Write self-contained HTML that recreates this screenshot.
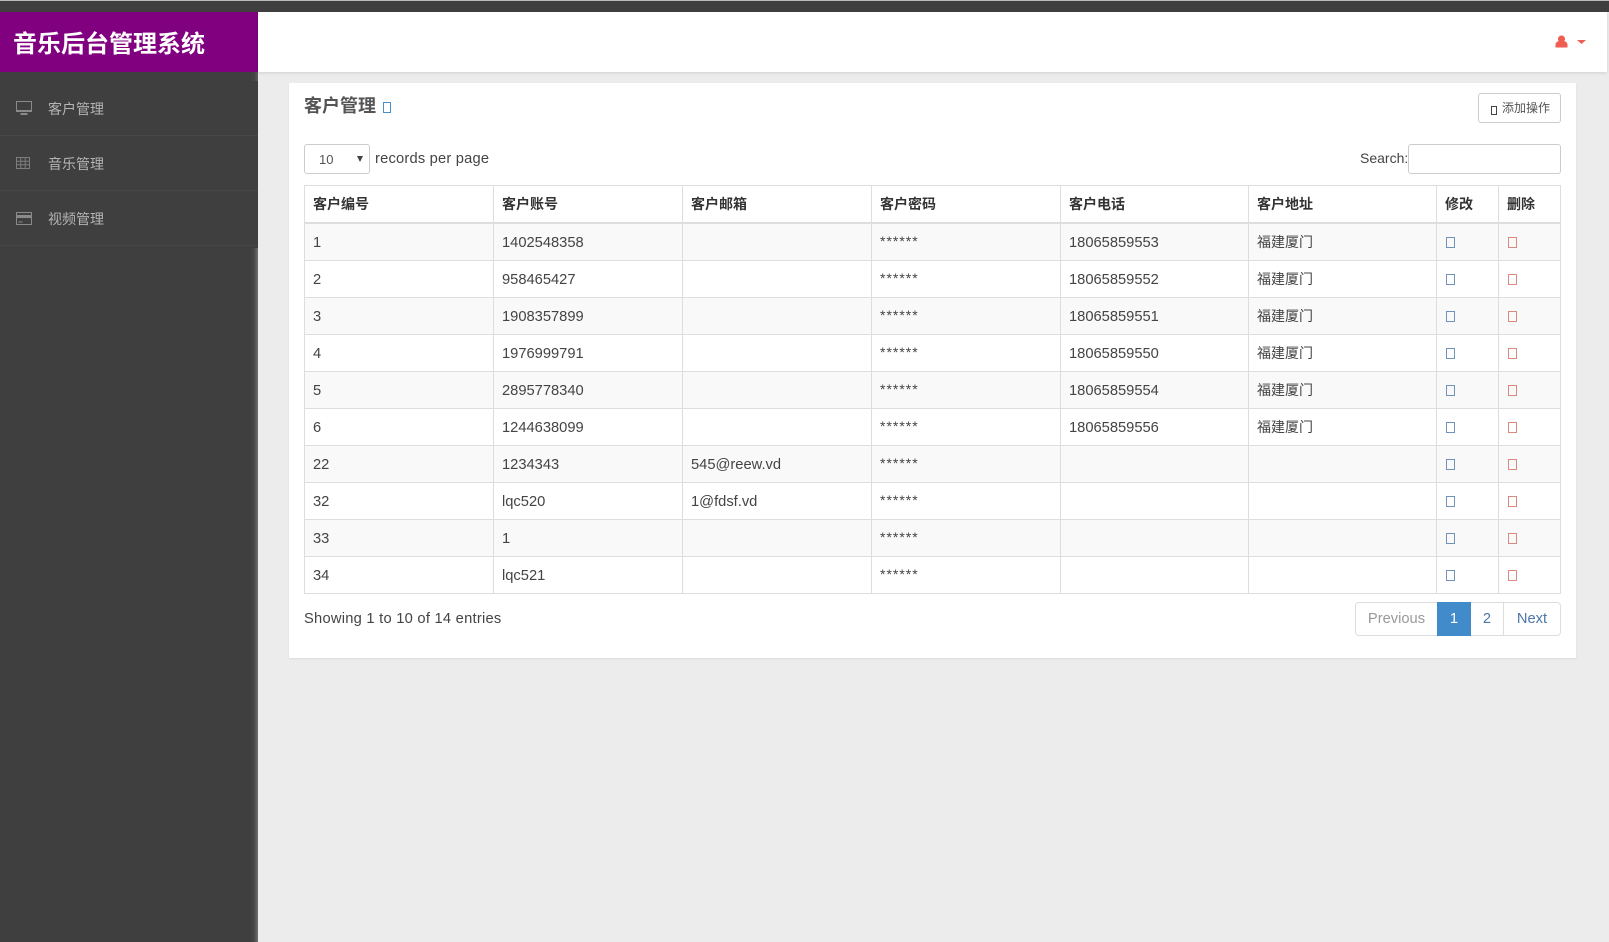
<!DOCTYPE html>
<html lang="zh">
<head>
<meta charset="utf-8">
<title>音乐后台管理系统</title>
<style>
*{box-sizing:border-box}
html,body{margin:0;padding:0;width:1609px;height:942px;overflow:hidden;background:#ececec;font-family:"Liberation Sans","Noto Sans CJK SC",sans-serif;color:#444}
.abs{position:absolute}
#top{left:0;top:1px;width:1609px;height:11px;background:#3f3f3f}
#topline{left:0;top:0;width:1609px;height:1px;background:#bbb}
#side{left:0;top:72px;width:258px;height:870px;background:#3f3f3f}
.sh{left:250px;width:8px;background:linear-gradient(to right,#3f3f3f,#474747 50%,#707070)}
#brand{left:0;top:12px;width:258px;height:60px;background:#800080;color:#fff;font-size:24px;font-weight:bold;line-height:65px;padding-left:13px;white-space:nowrap}
#head{left:258px;top:12px;width:1349px;height:60px;background:#fff;box-shadow:0 1px 3px rgba(0,0,0,.12)}
.mi{left:0;width:258px;height:55px;border-bottom:1px solid #474747;color:#b4b4b4;font-size:14px;line-height:56px;padding-left:48px}
#card{left:289px;top:83px;width:1287px;height:575px;background:#fff;box-shadow:0 1px 2px rgba(0,0,0,.08)}
#title{left:304px;top:93px;font-size:18px;font-weight:bold;color:#555;line-height:26px}
.t{width:8px;height:11px;border:1px solid #6f93ba;display:inline-block}
td .t{position:relative;top:1px;left:1px;width:9px}
.r{border-color:#d98a7e}
#btn{left:1478px;top:93px;width:83px;height:30px;border:1px solid #ccc;border-radius:3px;background:#fff;font-size:12px;color:#555;line-height:29px;padding-left:23px}
.ctl{border:1px solid #ccc;border-radius:3px;background:#fff;height:30px;top:144px}
.lbl{font-size:14.7px;line-height:20px;color:#444;letter-spacing:.2px}
table{position:absolute;left:304px;top:185px;width:1256px;border-collapse:collapse;table-layout:fixed;font-size:14.7px;color:#444}
th,td{border:1px solid #ddd;padding:0 0 0 8px;text-align:left;white-space:nowrap;overflow:hidden}
th{height:37.5px;font-size:14px;font-weight:bold;color:#333;border-bottom-width:2px}
td{height:37px;padding-top:2px}
tbody tr:nth-child(odd) td{background:#f9f9f9}
td.cn{font-size:14px;padding-top:1px}
td.pw{font-size:14px;padding-top:0;padding-bottom:2px;letter-spacing:1px}
#pag{left:1355px;top:602px;width:206px;height:34px;border:1px solid #ddd;border-radius:4px;font-size:14.7px;background:#fff}
#pag div{position:absolute;top:-1px;height:34px;text-align:center;line-height:35px;color:#4a76a8}
</style>
</head>
<body>
<div class="abs" id="topline"></div>
<div class="abs" id="top"></div>
<div class="abs" id="side"></div>
<div class="abs sh" style="top:248px;height:694px"></div>
<div class="abs sh" style="top:72px;height:9px;opacity:.6"></div>
<div class="abs" id="brand">音乐后台管理系统</div>
<div class="abs" id="head"></div>

<svg class="abs" style="left:1555px;top:34px" width="32" height="16" viewBox="0 0 32 16">
<path d="M6.500 1.500a3.500 3.500 0 0 1 2.800 5.600c2 .5 3.200 1.800 3.200 3.900v2.500H.5V11c0-2.100 1.200-3.400 3.200-3.900a3.500 3.500 0 0 1 2.800-5.600z" fill="#ef5e50"/>
<path d="M22 6h9l-4.500 4z" fill="#ef5e50"/>
</svg>

<div class="abs mi" style="top:81px">客户管理</div>
<div class="abs mi" style="top:136px">音乐管理</div>
<div class="abs mi" style="top:191px">视频管理</div>
<svg class="abs" style="left:16px;top:101px" width="16" height="15" viewBox="0 0 16 15"><path d="M.5.500h15v10H.500z" fill="none" stroke="#8a8a8a"/><path d="M1 9h14v2H1zM4.500 12h7v2h-7z" fill="#8a8a8a"/></svg>
<svg class="abs" style="left:16px;top:157px" width="14" height="12" viewBox="0 0 14 12"><path d="M.5.500h13v11H.500zM.5 4.200h13M.5 7.800h13M4.800.5v11M9.200.5v11" fill="none" stroke="#7d7d7d"/></svg>
<svg class="abs" style="left:16px;top:212px" width="16" height="13" viewBox="0 0 16 13"><path d="M.5.500h15v12H.500z" fill="none" stroke="#8a8a8a"/><path d="M1 3h14v3H1zM2.500 9.500h4v1h-4z" fill="#8a8a8a"/></svg>

<div class="abs" id="card"></div>
<div class="abs" id="title">客户管理</div>
<span class="abs t" style="left:383px;top:102px;border-color:#4a90c8"></span>
<div class="abs" id="btn">添加操作</div>
<span class="abs t" style="left:1491px;top:106px;width:6px;height:9px;border-color:#444"></span>

<div class="abs ctl" style="left:304px;width:66px"></div>
<div class="abs" style="left:319px;top:151px;font-size:13px;line-height:18px;color:#555">10</div>
<svg class="abs" style="left:357px;top:156px" width="6" height="6" viewBox="0 0 6 6"><path d="M0 0h6L3 6z" fill="#444"/></svg>
<div class="abs lbl" style="left:375px;top:149px">records per page</div>
<div class="abs lbl" style="left:1360px;top:148px;font-size:14px;letter-spacing:0">Search:</div>
<div class="abs ctl" style="left:1408px;width:153px"></div>

<table>
<colgroup><col style="width:189px"><col style="width:189px"><col style="width:189px"><col style="width:189px"><col style="width:188px"><col style="width:188px"><col style="width:62px"><col style="width:62px"></colgroup>
<thead><tr><th>客户编号</th><th>客户账号</th><th>客户邮箱</th><th>客户密码</th><th>客户电话</th><th>客户地址</th><th>修改</th><th>删除</th></tr></thead>
<tbody>
<tr><td>1</td><td>1402548358</td><td></td><td class="pw">******</td><td>18065859553</td><td class="cn">福建厦门</td><td><span class="t"></span></td><td><span class="t r"></span></td></tr>
<tr><td>2</td><td>958465427</td><td></td><td class="pw">******</td><td>18065859552</td><td class="cn">福建厦门</td><td><span class="t"></span></td><td><span class="t r"></span></td></tr>
<tr><td>3</td><td>1908357899</td><td></td><td class="pw">******</td><td>18065859551</td><td class="cn">福建厦门</td><td><span class="t"></span></td><td><span class="t r"></span></td></tr>
<tr><td>4</td><td>1976999791</td><td></td><td class="pw">******</td><td>18065859550</td><td class="cn">福建厦门</td><td><span class="t"></span></td><td><span class="t r"></span></td></tr>
<tr><td>5</td><td>2895778340</td><td></td><td class="pw">******</td><td>18065859554</td><td class="cn">福建厦门</td><td><span class="t"></span></td><td><span class="t r"></span></td></tr>
<tr><td>6</td><td>1244638099</td><td></td><td class="pw">******</td><td>18065859556</td><td class="cn">福建厦门</td><td><span class="t"></span></td><td><span class="t r"></span></td></tr>
<tr><td>22</td><td>1234343</td><td>545@reew.vd</td><td class="pw">******</td><td></td><td></td><td><span class="t"></span></td><td><span class="t r"></span></td></tr>
<tr><td>32</td><td>lqc520</td><td>1@fdsf.vd</td><td class="pw">******</td><td></td><td></td><td><span class="t"></span></td><td><span class="t r"></span></td></tr>
<tr><td>33</td><td>1</td><td></td><td class="pw">******</td><td></td><td></td><td><span class="t"></span></td><td><span class="t r"></span></td></tr>
<tr><td>34</td><td>lqc521</td><td></td><td class="pw">******</td><td></td><td></td><td><span class="t"></span></td><td><span class="t r"></span></td></tr>
</tbody>
</table>

<div class="abs lbl" style="left:304px;top:609px;letter-spacing:.25px">Showing 1 to 10 of 14 entries</div>
<div class="abs" id="pag">
<div style="left:0;width:81px;color:#999">Previous</div>
<div style="left:81px;width:34px;background:#428bca;color:#fff">1</div>
<div style="left:115px;width:33px;border-right:1px solid #ddd">2</div>
<div style="left:148px;width:56px">Next</div>
</div>
</body>
</html>
